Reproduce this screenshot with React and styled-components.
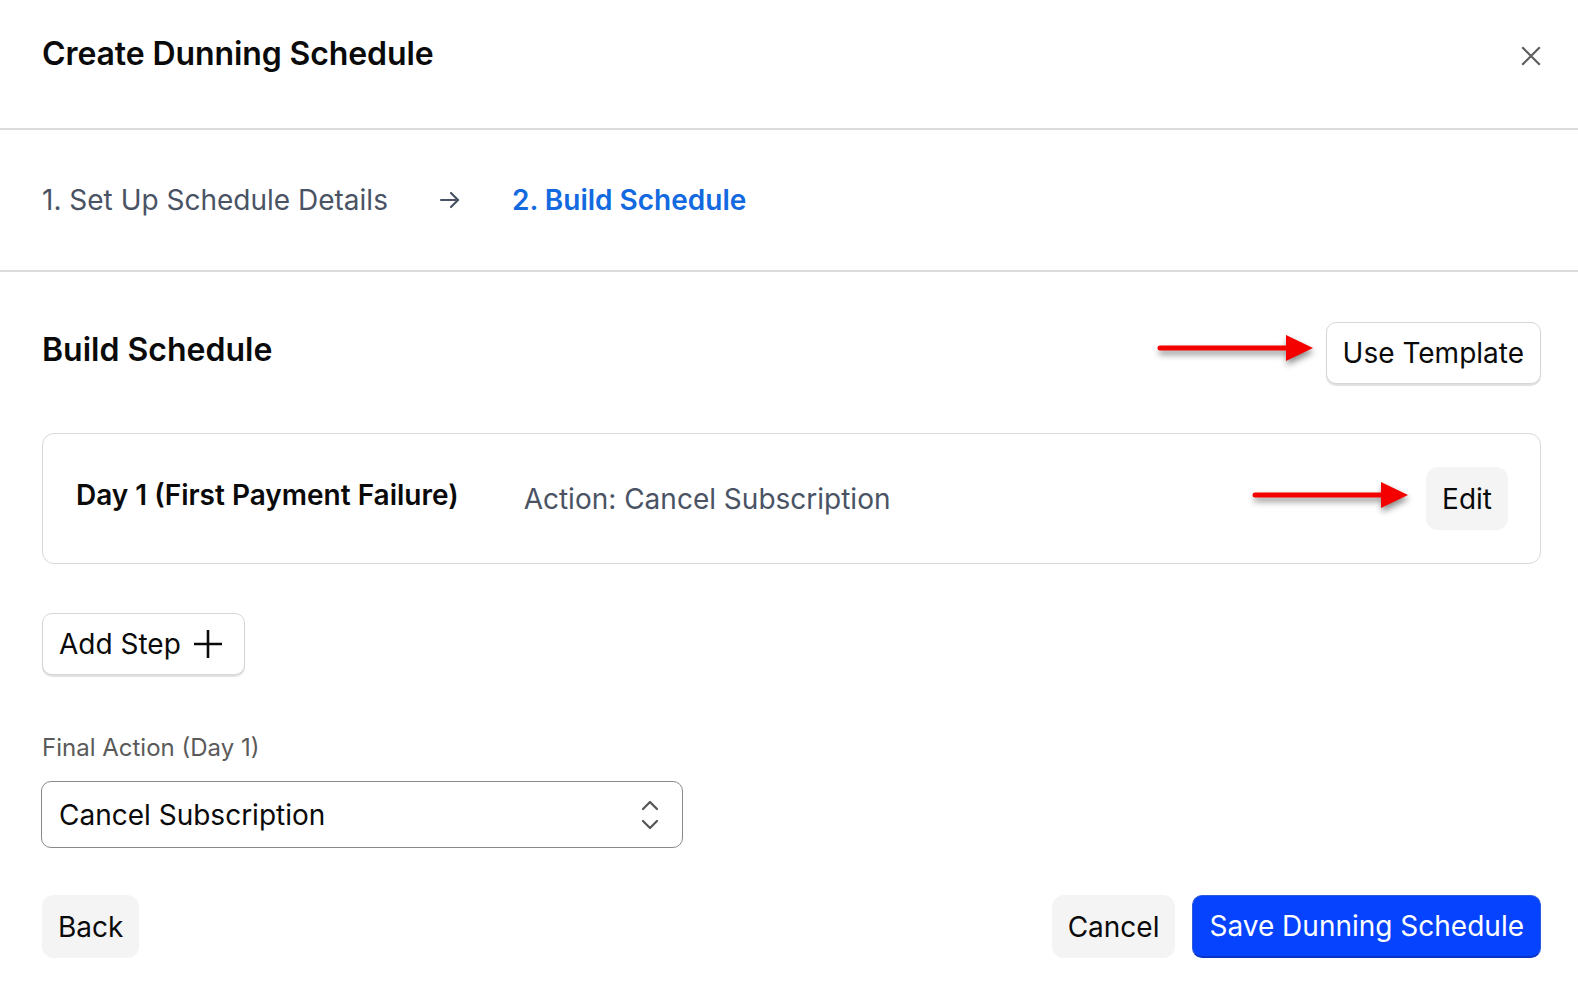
import React from 'react'
import styled, { createGlobalStyle } from 'styled-components'

const GlobalStyle = createGlobalStyle`
  html, body {
    margin: 0;
    padding: 0;
    background: #ffffff;
    overflow: hidden;
  }
  body {
    font-family: Inter, "Noto Sans", sans-serif;
    color: #0a0a0a;
    -webkit-font-smoothing: antialiased;
  }
  * { box-sizing: border-box; }
`

const Modal = styled.div`
  width: 100%;
  min-height: 100vh;
  background: #fff;
`

const Header = styled.header`
  display: flex;
  align-items: flex-start;
  justify-content: space-between;
  height: 130px;
  padding: 36px 36px 0 42px;
  border-bottom: 2px solid #dcdcdc;
`

const Title = styled.h1`
  margin: 0;
  font-size: 32px;
  line-height: 36px;
  font-weight: 600;
  letter-spacing: -0.1px;
`

const CloseButton = styled.button`
  border: 0;
  background: none;
  padding: 0;
  margin-top: 9px;
  width: 22px;
  height: 22px;
  display: flex;
  align-items: center;
  justify-content: center;
  cursor: pointer;
`

const Stepper = styled.nav`
  display: flex;
  align-items: center;
  height: 142px;
  padding: 0 42px;
  border-bottom: 2px solid #dcdcdc;
  font-size: 28px;
`

const Step = styled.span`
  color: ${p => (p.$active ? '#1269e0' : '#4a5364')};
  font-weight: ${p => (p.$active ? 600 : 400)};
`

const StepArrow = styled.span`
  display: flex;
  margin: 0 50px;
  color: #4a5364;
`

const Body = styled.main`
  padding: 50px 37px 0 42px;
`

const SectionRow = styled.div`
  position: relative;
  display: flex;
  align-items: center;
  justify-content: space-between;
`

const SectionTitle = styled.h2`
  margin: 0 0 6px;
  font-size: 32px;
  font-weight: 600;
  line-height: 36px;
`

const OutlineButton = styled.button`
  display: inline-flex;
  align-items: center;
  gap: 12px;
  height: 62px;
  padding: ${p => (p.$withIcon ? '0 21px 0 16px' : '0 16px')};
  font-family: inherit;
  font-size: 28px;
  color: #0a0a0a;
  background: #fff;
  border: 1.5px solid #d6d6d6;
  border-radius: 10px;
  box-shadow: 0 2px 1px rgba(0, 0, 0, 0.12);
  cursor: pointer;
`

const GhostButton = styled.button`
  height: 63px;
  padding: 0 16px;
  font-family: inherit;
  font-size: 28px;
  color: #0a0a0a;
  background: #f4f4f4;
  border: 0;
  border-radius: 12px;
  cursor: pointer;
`

const PrimaryButton = styled.button`
  height: 63px;
  padding: 0 16px;
  font-family: inherit;
  font-size: 28px;
  color: #fff;
  background: #0543ff;
  border: 1px solid #2e5bdc;
  border-bottom: 2px solid #0633c4;
  border-radius: 10px;
  cursor: pointer;
`

const StepCard = styled.div`
  position: relative;
  display: flex;
  align-items: center;
  height: 131px;
  margin-top: 49px;
  padding: 0 32px 0 33px;
  border: 1.5px solid #d9d9d9;
  border-radius: 12px;
`

const StepDay = styled.span`
  font-size: 28px;
  font-weight: 600;
  margin-top: -7px;
`

const StepAction = styled.span`
  flex: 1;
  margin-left: 65px;
  font-size: 28px;
  color: #4a5364;
`

const AddStepRow = styled.div`
  margin-top: 49px;
`

const FieldLabel = styled.label`
  display: block;
  margin-top: 57px;
  font-size: 24px;
  line-height: 32px;
  color: #5a5a5a;
`

const SelectBox = styled.div`
  display: flex;
  align-items: center;
  justify-content: space-between;
  width: 642px;
  height: 67px;
  margin: 17px 0 0 -1px;
  padding: 0 22px 0 17px;
  border: 1.5px solid #8a8a8a;
  border-radius: 10px;
  font-size: 28px;
`

const Footer = styled.footer`
  display: flex;
  justify-content: space-between;
  margin-top: 47px;
`

const FooterRight = styled.div`
  display: flex;
  gap: 17px;
`

const Annotation = styled.svg`
  position: absolute;
  top: ${p => p.$top}px;
  right: ${p => p.$right}px;
  overflow: visible;
  filter: drop-shadow(1px 4px 3px rgba(0, 0, 0, 0.45));
`

const RedArrow = ({ top, right }) => (
  <Annotation $top={top} $right={right} width="156" height="28" viewBox="0 0 156 28">
    <line x1="2" y1="14" x2="132" y2="14" stroke="#f50000" strokeWidth="5" strokeLinecap="round" />
    <polygon points="128,1 155,14 128,27" fill="#f50000" />
  </Annotation>
)

const CloseIcon = () => (
  <svg width="20" height="20" viewBox="0 0 20 20">
    <path d="M2 2 L18 18 M18 2 L2 18" stroke="#5e5e5e" strokeWidth="2.2" strokeLinecap="square" />
  </svg>
)

const ArrowRight = () => (
  <svg width="24" height="24" viewBox="0 0 24 24" fill="none" stroke="currentColor" strokeWidth="2.2" strokeLinecap="round" strokeLinejoin="round">
    <path d="M3 12h17" />
    <path d="M13 5l7 7-7 7" />
  </svg>
)

const PlusIcon = () => (
  <svg width="30" height="30" viewBox="0 0 30 30" fill="none" stroke="#0a0a0a" strokeWidth="2.6">
    <path d="M15 1v28M1 15h28" />
  </svg>
)

const UpDownIcon = () => (
  <svg width="20" height="30" viewBox="0 0 20 30" fill="none" stroke="#555" strokeWidth="2.2" strokeLinecap="round" strokeLinejoin="round">
    <path d="M3 9l7-7 7 7" />
    <path d="M3 21l7 7 7-7" />
  </svg>
)

export default function App() {
  return (
    <Modal>
      <GlobalStyle />
      <Header>
        <Title>Create Dunning Schedule</Title>
        <CloseButton aria-label="Close">
          <CloseIcon />
        </CloseButton>
      </Header>

      <Stepper>
        <Step>1. Set Up Schedule Details</Step>
        <StepArrow>
          <ArrowRight />
        </StepArrow>
        <Step $active>2. Build Schedule</Step>
      </Stepper>

      <Body>
        <SectionRow>
          <SectionTitle>Build Schedule</SectionTitle>
          <RedArrow top={12} right={227} />
          <OutlineButton>Use Template</OutlineButton>
        </SectionRow>

        <StepCard>
          <StepDay>Day 1 (First Payment Failure)</StepDay>
          <StepAction>Action: Cancel Subscription</StepAction>
          <RedArrow top={47} right={131} />
          <GhostButton>Edit</GhostButton>
        </StepCard>

        <AddStepRow>
          <OutlineButton $withIcon>
            Add Step
            <PlusIcon />
          </OutlineButton>
        </AddStepRow>

        <FieldLabel>Final Action (Day 1)</FieldLabel>
        <SelectBox>
          <span>Cancel Subscription</span>
          <UpDownIcon />
        </SelectBox>

        <Footer>
          <GhostButton>Back</GhostButton>
          <FooterRight>
            <GhostButton>Cancel</GhostButton>
            <PrimaryButton>Save Dunning Schedule</PrimaryButton>
          </FooterRight>
        </Footer>
      </Body>
    </Modal>
  )
}
